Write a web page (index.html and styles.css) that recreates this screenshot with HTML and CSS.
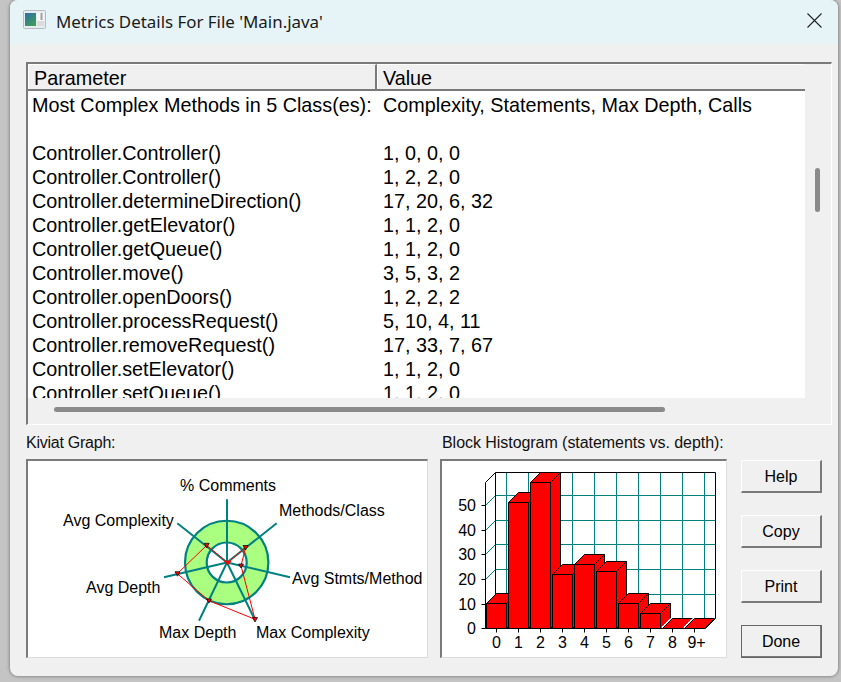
FILE: index.html
```html
<!DOCTYPE html>
<html lang="en">
<head>
<meta charset="utf-8">
<title>Metrics Details</title>
<link rel="stylesheet" href="styles.css">
</head>
<body>
<div class="window">
  <header class="titlebar">
    <svg class="app-icon" width="23" height="19" viewBox="0 0 23 19">
      <defs>
        <linearGradient id="iconfill" x1="0" y1="0" x2="0.6" y2="1">
          <stop offset="0" stop-color="#2c6fa8"/>
          <stop offset="1" stop-color="#3f9a5c"/>
        </linearGradient>
      </defs>
      <rect x="0.5" y="0.5" width="22" height="18" rx="1" fill="#e6ecef" stroke="#b4bcc2"/>
      <rect x="2" y="3" width="11" height="13" fill="url(#iconfill)"/>
      <rect x="14" y="3" width="7" height="13" fill="#f6f6f6"/>
      <rect x="17.5" y="3" width="2" height="7" fill="#a0a0a0"/>
      <rect x="14" y="11" width="7" height="5" fill="#dcdcdc"/>
    </svg>
    <span class="title">Metrics Details For File 'Main.java'</span>
    <svg class="close" width="15" height="15" viewBox="0 0 15 15"><path d="M0.5 0.5 L14.5 14.5 M14.5 0.5 L0.5 14.5" stroke="#222" stroke-width="1.1" fill="none"/></svg>
  </header>
  <main class="content">
    <section class="list-panel">
      <div class="list-head">
        <div class="head-cell head-param">Parameter</div>
        <div class="head-cell head-value">Value</div>
      </div>
      <div class="list-body">
        <div class="row"><span class="param">Most Complex Methods in 5 Class(es):</span><span>Complexity, Statements, Max Depth, Calls</span></div>
        <div class="row"><span class="param"></span><span></span></div>
        <div class="row"><span class="param">Controller.Controller()</span><span>1, 0, 0, 0</span></div>
        <div class="row"><span class="param">Controller.Controller()</span><span>1, 2, 2, 0</span></div>
        <div class="row"><span class="param">Controller.determineDirection()</span><span>17, 20, 6, 32</span></div>
        <div class="row"><span class="param">Controller.getElevator()</span><span>1, 1, 2, 0</span></div>
        <div class="row"><span class="param">Controller.getQueue()</span><span>1, 1, 2, 0</span></div>
        <div class="row"><span class="param">Controller.move()</span><span>3, 5, 3, 2</span></div>
        <div class="row"><span class="param">Controller.openDoors()</span><span>1, 2, 2, 2</span></div>
        <div class="row"><span class="param">Controller.processRequest()</span><span>5, 10, 4, 11</span></div>
        <div class="row"><span class="param">Controller.removeRequest()</span><span>17, 33, 7, 67</span></div>
        <div class="row"><span class="param">Controller.setElevator()</span><span>1, 1, 2, 0</span></div>
        <div class="row"><span class="param">Controller.setQueue()</span><span>1, 1, 2, 0</span></div>
      </div>
      <div class="vtrack"><div class="vthumb"></div></div>
      <div class="htrack"><div class="hthumb"></div></div>
    </section>
    <section class="bottom">
      <div class="kiviat-col">
        <div class="caption caption-kiviat">Kiviat Graph:</div>
        <div class="graph-box">
          <svg class="graph kiviat" viewBox="28 461 399 196" width="399" height="196">
            <path fill-rule="evenodd" fill="#abff80" stroke="teal" stroke-width="2.2" d="M185 562.5a41.7 41.7 0 1 0 83.4 0a41.7 41.7 0 1 0 -83.4 0Z M206.7 562.5a20 20 0 1 0 40 0a20 20 0 1 0 -40 0Z"/>
            <g stroke="teal" stroke-width="2" fill="none">
              <path d="M227 562.5V499.3M227 562.5L276.7 523.3M227 562.5L290 577.3M227 562.5L255 620M227 562.5L199 620.7M227 562.5L164 577.3M227 562.5L177.3 523.3"/>
            </g>
            <polygon points="227.7,562.7 245.7,547.3 241,565.7 255,619.3 209,600.7 177.3,573.7 206.7,545.3" fill="none" stroke="#f00" stroke-width="1"/>
            <g fill="#f00" stroke="#000" stroke-width="0.7">
              <path d="M224.5 561h6.5l-3.2 4z" stroke="#f00"/>
              <path d="M243 545.5h5l-2.5 4.5z"/>
              <path d="M238.5 564h5l-2.5 4z"/>
              <path d="M252.5 617.5h5l-2.5 4.5z"/>
              <path d="M206.5 599h5l-2.5 4z"/>
              <path d="M175 571.7h5l-2.5 4.5z"/>
              <path d="M204.2 543.3h5l-2.5 4.5z"/>
            </g>
            <g class="chart-text">
              <text x="180" y="491">% Comments</text>
              <text x="279" y="516">Methods/Class</text>
              <text x="63" y="526">Avg Complexity</text>
              <text x="292" y="584">Avg Stmts/Method</text>
              <text x="86" y="593">Avg Depth</text>
              <text x="159" y="638">Max Depth</text>
              <text x="256" y="638">Max Complexity</text>
            </g>
          </svg>
        </div>
      </div>
      <div class="hist-col">
        <div class="caption caption-hist">Block Histogram (statements vs. depth):</div>
        <div class="graph-box">
          <svg class="graph hist" viewBox="442 461 284 196" width="284" height="196">
            <g stroke="teal" stroke-width="1" fill="none">
              <path d="M506.5 472.5V618.5M528.5 472.5V618.5M550.5 472.5V618.5M572.5 472.5V618.5M594.5 472.5V618.5M616.5 472.5V618.5M638.5 472.5V618.5M660.5 472.5V618.5M682.5 472.5V618.5M704.5 472.5V618.5"/>
              <path d="M495.5 495.5H715.5M495.5 520.5H715.5M495.5 544.5H715.5M495.5 569.5H715.5M495.5 594.5H715.5"/>
              <path d="M485.5 505.5L495.5 495.5M485.5 530.5L495.5 520.5M485.5 554.5L495.5 544.5M485.5 579.5L495.5 569.5M485.5 604.5L495.5 594.5"/>
            </g>
            <g stroke="#000" stroke-width="1" fill="none">
              <path d="M485.5 628.5V482.5L495.5 472.5H715.5V618.5L705.5 628.5H485.5"/>
              <path d="M495.5 472.5V618.5"/>
              <path d="M481.5 505.5H485.5M481.5 530.5H485.5M481.5 554.5H485.5M481.5 579.5H485.5M481.5 604.5H485.5M481.5 628.5H485.5"/>
              <path d="M496.5 628.5V632.5M518.5 628.5V632.5M540.5 628.5V632.5M562.5 628.5V632.5M584.5 628.5V632.5M606.5 628.5V632.5M628.5 628.5V632.5M650.5 628.5V632.5M672.5 628.5V632.5M694.5 628.5V632.5"/>
            </g>
            <g fill="#f00" stroke="#000" stroke-width="1" stroke-linejoin="miter">
              <path d="M486.5 603.5l10 -10h20l-10 10zM506.5 603.5l10 -10v25l-10 10z"/><rect x="486.5" y="603.5" width="20" height="25"/>
              <path d="M508.5 502.5l10 -10h20l-10 10zM528.5 502.5l10 -10v126l-10 10z"/><rect x="508.5" y="502.5" width="20" height="126"/>
              <path d="M530.5 482.5l10 -10h20l-10 10zM550.5 482.5l10 -10v146l-10 10z"/><rect x="530.5" y="482.5" width="20" height="146"/>
              <path d="M552.5 574.5l10 -10h20l-10 10zM572.5 574.5l10 -10v54l-10 10z"/><rect x="552.5" y="574.5" width="20" height="54"/>
              <path d="M574.5 564.5l10 -10h20l-10 10zM594.5 564.5l10 -10v64l-10 10z"/><rect x="574.5" y="564.5" width="20" height="64"/>
              <path d="M596.5 571.5l10 -10h20l-10 10zM616.5 571.5l10 -10v57l-10 10z"/><rect x="596.5" y="571.5" width="20" height="57"/>
              <path d="M618.5 603.5l10 -10h20l-10 10zM638.5 603.5l10 -10v25l-10 10z"/><rect x="618.5" y="603.5" width="20" height="25"/>
              <path d="M640.5 613.5l10 -10h20l-10 10zM660.5 613.5l10 -10v15l-10 10z"/><rect x="640.5" y="613.5" width="20" height="15"/>
              <path d="M662.5 628.5l10 -10h20l-10 10z"/>
              <path d="M684.5 628.5l10 -10h20l-10 10z"/>
            </g>
            <path d="M661.5 627.5l9 -9M683.5 627.5l9 -9" stroke="#fff" stroke-width="1" fill="none"/>
            <g class="chart-text">
              <g text-anchor="end">
                <text x="476" y="511">50</text>
                <text x="476" y="536">40</text>
                <text x="476" y="560">30</text>
                <text x="476" y="585">20</text>
                <text x="476" y="610">10</text>
                <text x="476" y="634">0</text>
              </g>
              <g text-anchor="middle">
                <text x="496.5" y="648">0</text>
                <text x="518.5" y="648">1</text>
                <text x="540.5" y="648">2</text>
                <text x="562.5" y="648">3</text>
                <text x="584.5" y="648">4</text>
                <text x="606.5" y="648">5</text>
                <text x="628.5" y="648">6</text>
                <text x="650.5" y="648">7</text>
                <text x="672.5" y="648">8</text>
                <text x="696.5" y="648">9+</text>
              </g>
            </g>
          </svg>
        </div>
      </div>
      <div class="buttons">
        <button class="btn">Help</button>
        <button class="btn">Copy</button>
        <button class="btn">Print</button>
        <button class="btn btn-default">Done</button>
      </div>
    </section>
  </main>
</div>
</body>
</html>
```
FILE: styles.css
```css
* { box-sizing: border-box; }
html, body { margin: 0; padding: 0; }
body {
  width: 841px;
  height: 682px;
  overflow: hidden;
  background: #c4c4c4;
  font-family: "Liberation Sans", Arial, sans-serif;
  color: #000;
}
.window {
  width: 828px;
  height: 676px;
  margin-left: 10px;
  background: #f0f0f0;
  border-radius: 8px;
  overflow: hidden;
  display: flex;
  flex-direction: column;
  box-shadow: 0 0 3px 1px #8c8c8c;
}
.titlebar {
  height: 44px;
  flex: none;
  background: #e6f4f7;
  display: flex;
  align-items: center;
  padding: 0 16px 0 13px;
}
.app-icon { flex: none; margin-right: 10px; margin-bottom: 5px; }
.title {
  font-family: "Noto Sans", sans-serif;
  font-size: 16.9px;
  color: #1a1a1a;
  flex: 1;
  padding-bottom: 2px;
}
.close { flex: none; margin-bottom: 3px; }
.content {
  flex: 1;
  padding: 18px 6px 0 16px;
  display: flex;
  flex-direction: column;
}
.list-panel {
  position: relative;
  width: 806px;
  height: 363px;
  flex: none;
  border-top: 2px solid #7a7a7a;
  border-left: 2px solid #7a7a7a;
  border-right: 1px solid #fff;
  border-bottom: 1px solid #fff;
  font-size: 19.8px;
}
.list-head {
  display: flex;
  width: 777px;
  height: 27px;
  background: #f0f0f0;
  border-bottom: 2px solid #7a7a7a;
}
.head-cell {
  border-top: 1px solid #fff;
  border-left: 1px solid #fff;
  line-height: 26px;
  padding-left: 5px;
}
.head-param { width: 349px; border-right: 2px solid #7a7a7a; }
.head-value { width: 427px; }
.list-body {
  width: 777px;
  height: 307px;
  background: #fff;
  overflow: hidden;
}
.row {
  display: flex;
  height: 24px;
  line-height: 28px;
  white-space: nowrap;
  padding-left: 4px;
}
.param { width: 351px; flex: none; }
.vtrack {
  position: absolute;
  left: 787px;
  top: 104px;
  width: 5px;
  height: 44px;
}
.vthumb { width: 5px; height: 44px; background: #8a8a8a; border-radius: 3px; }
.htrack {
  position: absolute;
  left: 26px;
  top: 343px;
  width: 611px;
  height: 5px;
}
.hthumb { width: 611px; height: 5px; background: #8a8a8a; border-radius: 3px; }
.bottom {
  display: flex;
  margin-top: 8px;
  height: 225px;
}
.caption {
  font-size: 16px;
  line-height: 19px;
  height: 26px;
  color: #111;
  white-space: nowrap;
}
.caption-kiviat { letter-spacing: -0.25px; }
.caption-hist { padding-left: 2px; letter-spacing: -0.05px; }
.kiviat-col { width: 402px; flex: none; }
.hist-col { width: 287px; flex: none; margin-left: 12px; }
.graph-box {
  height: 199px;
  background: #fff;
  border-top: 2px solid #7a7a7a;
  border-left: 2px solid #7a7a7a;
  border-right: 1px solid #dcdcdc;
  border-bottom: 1px solid #dcdcdc;
}
.graph { display: block; }
.chart-text text {
  font-family: "Liberation Sans", Arial, sans-serif;
  font-size: 16px;
  fill: #000;
}
.buttons {
  width: 81px;
  flex: none;
  margin-left: 14px;
  padding-top: 27px;
  display: flex;
  flex-direction: column;
  gap: 22px;
}
.btn {
  height: 33px;
  padding: 2px 0 0;
  background: #f0f0f0;
  border: 0;
  border-top: 1px solid #fff;
  border-left: 1px solid #fff;
  border-right: 2px solid #7a7a7a;
  border-bottom: 2px solid #7a7a7a;
  font-family: "Liberation Sans", Arial, sans-serif;
  font-size: 16px;
  color: #000;
}
.btn-default {
  outline: 1px solid #666;
  outline-offset: -1px;
}
```
